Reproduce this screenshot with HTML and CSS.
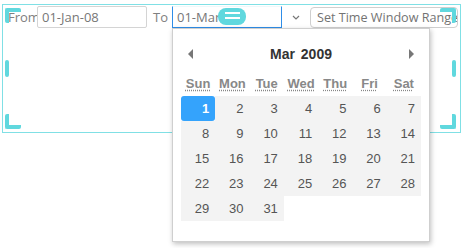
FILE: index.html
```html
<!DOCTYPE html>
<html lang="en">
<head>
  <meta charset="UTF-8">
  <title>Time Window Filter</title>
  <link rel="stylesheet" href="styles.css">
</head>
<body>
  <div class="widget">
    <div class="toolbar">
      <span class="lbl lbl-from">From</span>
      <input class="date" type="text" value="01-Jan-08">
      <span class="lbl lbl-to">To</span>
      <input class="date date-active" type="text" value="01-Mar-09">
      <span class="caret">
        <svg width="8" height="5" viewBox="0 0 8 5"><path d="M1 1l3 3 3-3" fill="none" stroke="#777" stroke-width="1.2"/></svg>
      </span>
      <button class="range-btn">Set Time Window Range</button>
    </div>

    <!-- date picker dropdown -->
    <div class="calendar">
      <div class="cal-head">
        <span class="arrow arrow-prev"></span>
        <span class="cal-title"><b>Mar</b> <b>2009</b></span>
        <span class="arrow arrow-next"></span>
      </div>
      <div class="cal-days">
        <abbr>Sun</abbr><abbr>Mon</abbr><abbr>Tue</abbr><abbr>Wed</abbr><abbr>Thu</abbr><abbr>Fri</abbr><abbr>Sat</abbr>
      </div>
      <div class="cal-grid">
        <span class="day selected">1</span><span class="day">2</span><span class="day">3</span><span class="day">4</span><span class="day">5</span><span class="day">6</span><span class="day">7</span>
        <span class="day">8</span><span class="day">9</span><span class="day">10</span><span class="day">11</span><span class="day">12</span><span class="day">13</span><span class="day">14</span>
        <span class="day">15</span><span class="day">16</span><span class="day">17</span><span class="day">18</span><span class="day">19</span><span class="day">20</span><span class="day">21</span>
        <span class="day">22</span><span class="day">23</span><span class="day">24</span><span class="day">25</span><span class="day">26</span><span class="day">27</span><span class="day">28</span>
        <span class="day">29</span><span class="day">30</span><span class="day">31</span>
      </div>
    </div>

    <!-- selection handles -->
    <span class="handle corner tl"></span>
    <span class="handle side ml"></span>
    <span class="handle corner bl"></span>
    <span class="handle corner tr"></span>
    <span class="handle side mr"></span>
    <span class="handle corner br"></span>
    <span class="handle grip"><i></i><i></i></span>
  </div>
</body>
</html>
```

FILE: styles.css
```css
html, body {
  min-height: 248px;
}
body {
  margin: 0;
  font-family: "Open Sans", "Noto Sans", sans-serif;
  font-size: 13px;
  color: #777;
  background: #fff;
}
.widget {
  position: relative;
  box-sizing: border-box;
  width: 459px;
  height: 129px;
  margin: 4px 0 0 2px;
  border: 1px solid #80e0e5;
}
.toolbar {
  display: flex;
  align-items: center;
  padding: 1px 0 0 5px;
}
.lbl {
  line-height: 22px;
  color: #808080;
}
.lbl-from {
  width: 29px;
}
.lbl-to {
  width: 19px;
  margin-left: 6px;
}
.date {
  box-sizing: border-box;
  width: 110px;
  height: 22px;
  margin: 0;
  padding: 0 4px;
  border: 1px solid #d4d4d4;
  border-radius: 2px;
  font: inherit;
  color: #777;
  outline: none;
}
.date-active {
  border-color: #eef8fb #2f8ee8 #2f8ee8 #2f8ee8;
  border-radius: 0;
}
.caret {
  display: flex;
  justify-content: center;
  width: 28px;
}
.range-btn {
  box-sizing: border-box;
  width: 148px;
  height: 21px;
  margin-top: 1px;
  padding: 0 0 0 6px;
  text-align: left;
  white-space: nowrap;
  overflow: hidden;
  border: 1px solid #cfcfcf;
  border-radius: 4px;
  background: #fff;
  font: inherit;
  font-size: 12.6px;
  color: #737373;
}

.calendar {
  position: absolute;
  left: 169px;
  top: 23px;
  box-sizing: border-box;
  width: 258px;
  height: 214px;
  padding: 9px 8px 0;
  background: #fff;
  border: 1px solid #cfcfcf;
  box-shadow: 1px 2px 5px rgba(0, 0, 0, 0.25);
  font-family: "Liberation Sans", Arial, sans-serif;
  z-index: 2;
}
.cal-head {
  display: flex;
  align-items: center;
  justify-content: space-between;
  height: 32px;
  padding: 0 7px;
}
.cal-title {
  font-size: 14px;
  color: #333;
  word-spacing: 2px;
}
.arrow {
  width: 0;
  height: 0;
  border-top: 5px solid transparent;
  border-bottom: 5px solid transparent;
}
.arrow-prev {
  border-right: 5px solid #777;
}
.arrow-next {
  border-left: 5px solid #777;
}
.cal-days {
  display: grid;
  grid-template-columns: repeat(7, 1fr);
  height: 26px;
  align-items: center;
}
.cal-days abbr {
  text-align: center;
  font-weight: bold;
  font-size: 13px;
  color: #888;
  text-decoration: underline dotted;
  text-underline-offset: 2px;
}
.cal-grid {
  display: grid;
  grid-template-columns: repeat(7, 1fr);
  grid-auto-rows: 25px;
  width: 240px;
}
.day {
  display: flex;
  align-items: center;
  justify-content: flex-end;
  padding-right: 6px;
  background: #f3f3f3;
  color: #555;
  font-size: 13px;
}
.day.selected {
  background: #34a3fc;
  color: #fff;
  font-weight: bold;
  border-radius: 3px;
}

.handle {
  position: absolute;
  box-sizing: border-box;
  z-index: 3;
}
.corner {
  width: 16px;
  height: 15px;
  border: 0 solid #60d8de;
  border-radius: 2px;
}
.tl { left: 2px; top: 3px; border-top-width: 4px; border-left-width: 4px; }
.bl { left: 2px; top: 109px; border-bottom-width: 4px; border-left-width: 4px; }
.tr { left: 437px; top: 3px; border-top-width: 4px; border-right-width: 4px; }
.br { left: 437px; top: 109px; border-bottom-width: 4px; border-right-width: 4px; }
.side {
  top: 55px;
  width: 4px;
  height: 17px;
  border-radius: 2px;
  background: #60d8de;
}
.ml { left: 2px; }
.mr { left: 449px; }
.grip {
  left: 215px;
  top: 3px;
  width: 28px;
  height: 17px;
  padding: 4px 0 0 7px;
  border-radius: 8px;
  background: #60d8de;
}
.grip i {
  display: block;
  width: 15px;
  height: 2px;
  margin-bottom: 3px;
  background: #fff;
}
```
